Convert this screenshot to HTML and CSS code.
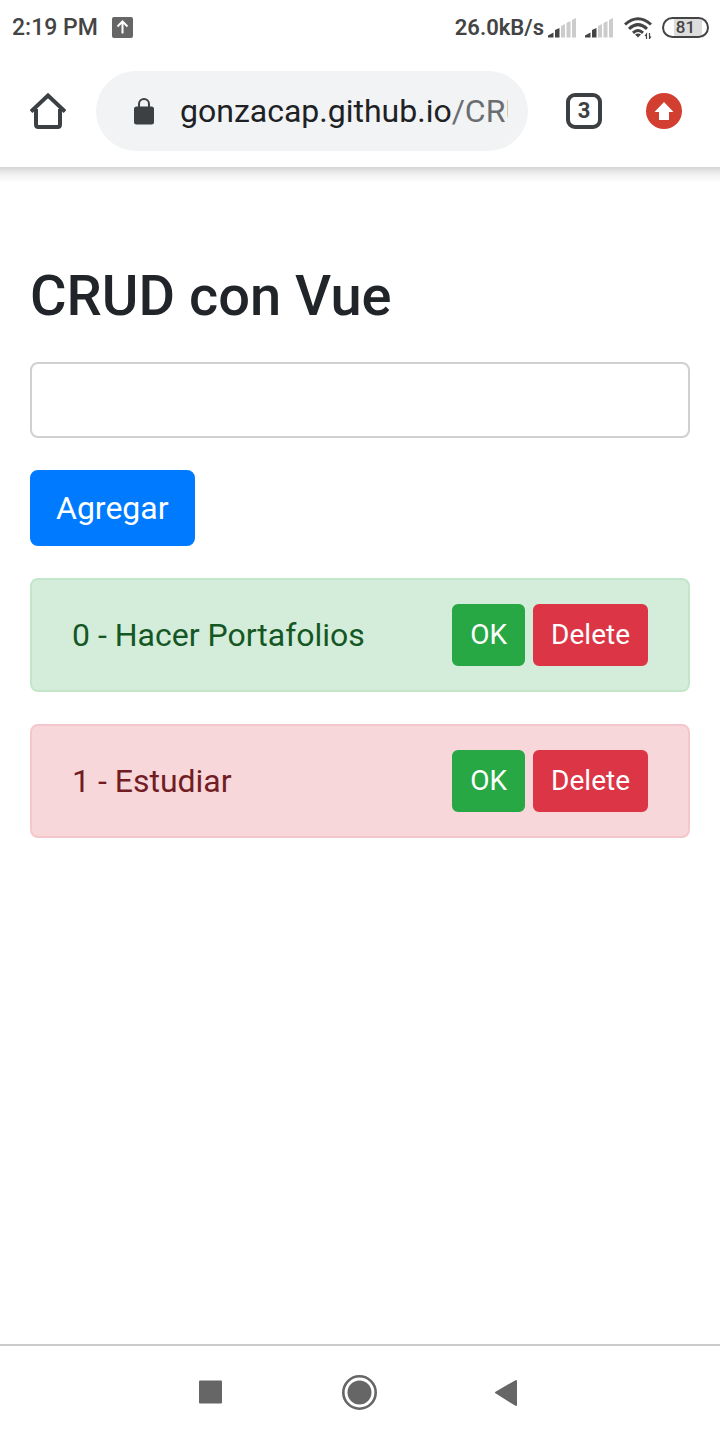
FILE: index.html
```html
<!DOCTYPE html>
<html lang="es">
<head>
<meta charset="utf-8">
<meta name="viewport" content="width=device-width, initial-scale=1">
<title>CRUD con Vue</title>
<link rel="stylesheet" href="styles.css">
</head>
<body>
<div class="screen">
  <div class="status">
    <span class="clock">2:19 PM</span>
    <svg class="upload" width="21" height="21" viewBox="0 0 21 21" aria-hidden="true"><rect width="21" height="21" rx="2" fill="#666"/><path d="M10.500 16.500V5M5.500 9.500l5-5 5 5" fill="none" stroke="#fff" stroke-width="2"/></svg>
    <span class="speed">26.0kB/s</span>
    <svg class="signal" width="28" height="20" viewBox="0 0 28 20" aria-hidden="true"><path d="M0 19.500v-2l5.500-3v5zM7 19.500V12l4.500-2v9.500z" fill="#444"/><path d="M13 19.500V8l4-2v13.500zM18.500 19.500V5l4-2v16.500zM24 19.500V2l4-2v19.500z" fill="#ccc"/></svg>
    <svg class="signal-two" width="28" height="20" viewBox="0 0 28 20" aria-hidden="true"><path d="M0 19.500v-2l5.500-3v5zM7 19.500V12l4.500-2v9.500z" fill="#444"/><path d="M13 19.500V8l4-2v13.500zM18.500 19.500V5l4-2v16.500zM24 19.500V2l4-2v19.500z" fill="#ccc"/></svg>
    <svg class="wifi" width="29" height="22" viewBox="0 0 29 22" aria-hidden="true"><g fill="none" stroke="#444" stroke-width="3"><path d="M1 7.500Q14 -4 27 7.500"/><path d="M5 11.800Q14 3.500 23 11.800"/><path d="M9 15.800Q14 11.300 19 15.800"/></g><path d="M11 17.500q3-2 6 0l-3 3z" fill="#444"/><path d="M22.500 22v-5l-1.500 2M25.500 16v5.500l1.500-2" fill="none" stroke="#444" stroke-width="1.200"/></svg>
    <span class="battery">81</span>
  </div>
  <header class="toolbar">
    <button class="icon-btn home" aria-label="Inicio"><svg width="36" height="36" viewBox="0 0 36 36"><path d="M1 18.500L18 2.500l17 16" fill="none" stroke="#3c4043" stroke-width="4"/><path d="M6 16v15.500q0 2.500 2.500 2.500h19q2.500 0 2.500-2.500V16" fill="none" stroke="#3c4043" stroke-width="4"/></svg></button>
    <div class="omnibox">
      <svg class="lock" width="20" height="27" viewBox="0 0 20 27" aria-hidden="true"><rect y="8.500" width="20" height="18" rx="2.500" fill="#3c4043"/><path d="M5 10V6a5 5 0 0 1 10 0v4" fill="none" stroke="#3c4043" stroke-width="2"/></svg>
      <span class="url">gonzacap.github.io<span class="path">/CRUD</span></span>
    </div>
    <button class="icon-btn tabs" aria-label="3 pestañas">3</button>
    <button class="icon-btn update" aria-label="Actualizar"><svg width="36" height="36" viewBox="0 0 36 36"><circle cx="18" cy="18" r="18" fill="#d23f31"/><path d="M18 9l9.500 10H23v8H13v-8H8.500z" fill="#fff"/></svg></button>
  </header>
  <main class="page">
    <h1>CRUD con Vue</h1>
    <input class="field" type="text" aria-label="Nueva tarea">
    <button class="btn btn-add">Agregar</button>
    <div class="alert done">
      <span class="task">0 - Hacer Portafolios</span>
      <button class="btn small ok">OK</button>
      <button class="btn small delete">Delete</button>
    </div>
    <div class="alert pending">
      <span class="task">1 - Estudiar</span>
      <button class="btn small ok">OK</button>
      <button class="btn small delete">Delete</button>
    </div>
  </main>
  <nav class="navbar">
    <button class="icon-btn" aria-label="Recientes"><svg width="36" height="36" viewBox="0 0 36 36"><rect x="5" y="5.500" width="23" height="23" rx="1" fill="#666"/></svg></button>
    <button class="icon-btn" aria-label="Pantalla de inicio"><svg width="36" height="36" viewBox="0 0 36 36"><circle cx="17.500" cy="17.500" r="16.200" fill="none" stroke="#666" stroke-width="2.600"/><circle cx="17.500" cy="17.500" r="12" fill="#666"/></svg></button>
    <button class="icon-btn" aria-label="Atrás"><svg width="36" height="36" viewBox="0 0 36 36"><path d="M6 17.500L26 6v24z" fill="#666" stroke="#666" stroke-width="2" stroke-linejoin="round"/></svg></button>
  </nav>
</div>
</body>
</html>
```
FILE: styles.css
```css
* {
  box-sizing: border-box;
}

body {
  margin: 0;
  background: #fff;
  color: #212529;
  font-family: Roboto, sans-serif;
  font-size: 32px;
}

button,
input {
  font-family: inherit;
}

svg {
  display: block;
  flex: none;
}

.screen {
  display: flex;
  flex-direction: column;
  min-height: 100vh;
}

.status {
  display: flex;
  align-items: center;
  height: 55px;
  padding: 0 11px 0 12px;
  color: #444;
  font-size: 22px;
  font-weight: 600;
  line-height: 28px;
}

.clock {
  font-size: 23px;
  font-weight: 500;
}

.upload {
  margin-left: 14px;
}

.speed {
  margin-left: auto;
}

.signal {
  margin-left: 4px;
}

.signal-two {
  margin-left: 9px;
}

.wifi {
  margin-left: 11px;
}

.battery {
  width: 47px;
  height: 21px;
  margin-left: 9px;
  border: 2px solid #444;
  border-radius: 11px;
  background: linear-gradient(90deg, #fff 10px, #ddd 10px 38px, #fff 38px);
  font-size: 17px;
  font-weight: 500;
  line-height: 17px;
  text-align: center;
}

.toolbar {
  display: flex;
  align-items: center;
  padding: 16px 38px 16px 30px;
}

.icon-btn {
  flex: none;
  width: 36px;
  height: 36px;
  padding: 0;
  border: 0;
  background: none;
}

.omnibox {
  display: flex;
  flex: 1;
  align-items: center;
  min-width: 0;
  height: 80px;
  margin: 0 38px 0 30px;
  padding: 0 20px 0 38px;
  border-radius: 40px;
  background: #f1f3f4;
}

.url {
  flex: 1;
  min-width: 0;
  margin-left: 26px;
  overflow: hidden;
  color: #202124;
  line-height: 50px;
  white-space: nowrap;
}

.path {
  color: #6b6e71;
}

.tabs {
  margin-right: 44px;
  border: 4px solid #3c4043;
  border-radius: 9px;
  color: #3c4043;
  font-size: 22px;
  font-weight: 700;
  line-height: 28px;
}

.page {
  display: flex;
  flex: 1;
  flex-direction: column;
  align-items: flex-start;
  gap: 32px;
  padding: 95px 30px 32px;
  background: linear-gradient(#d4d4d4, #f0f0f0 7px, #fff 16px);
}

h1 {
  margin: 0;
  font-size: 56px;
  font-weight: 500;
  line-height: 68px;
}

.field {
  width: 100%;
  height: 76px;
  padding: 12px 24px;
  border: 2px solid #d0d0d0;
  border-radius: 8px;
  background: #fff;
  font-size: 32px;
}

.btn {
  padding: 12px 24px;
  border: 2px solid transparent;
  border-radius: 8px;
  color: #fff;
  font-size: 32px;
  line-height: 48px;
}

.btn-add {
  border-color: #007bff;
  background: #007bff;
}

.alert {
  display: flex;
  align-items: center;
  gap: 8px;
  width: 100%;
  padding: 24px 40px;
  border: 2px solid;
  border-radius: 8px;
}

.task {
  flex: 1;
}

.done {
  border-color: #c3e6cb;
  background: #d4edda;
  color: #155724;
}

.pending {
  border-color: #f5c6cb;
  background: #f8d7da;
  color: #721c24;
}

.small {
  padding: 8px 16px;
  border-radius: 6px;
  font-size: 28px;
  line-height: 42px;
}

.ok {
  border-color: #28a745;
  background: #28a745;
}

.delete {
  border-color: #dc3545;
  background: #dc3545;
}

.navbar {
  display: flex;
  align-items: center;
  justify-content: center;
  gap: 112px;
  height: 96px;
  border-top: 2px solid #ccc;
}
```
